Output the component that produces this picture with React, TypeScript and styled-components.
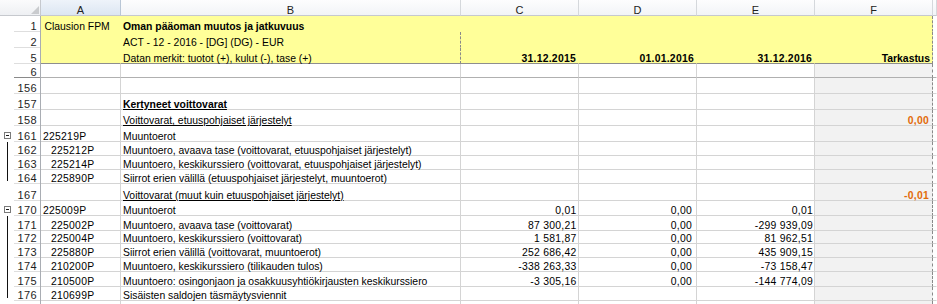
import React from 'react';
import styled, { createGlobalStyle } from 'styled-components';

const GlobalStyle = createGlobalStyle`
  html, body { margin: 0; padding: 0; background: #ffffff; }
  body { overflow: hidden; }
`;

const FONT = `"Liberation Sans", Arial, "DejaVu Sans", sans-serif`;
const GRID = '41px 80px 340px 118px 118px 118px 118px 1fr';

type Fill = 'white' | 'yellow' | 'grey';
type Edge = 'grid' | 'none' | 'dark' | 'freeze' | 'dash';
type Col = 'A' | 'B' | 'C' | 'D' | 'E' | 'F';

const FILL: Record<Fill, string> = { white: '#ffffff', yellow: '#ffff99', grey: '#f2f2f2' };
const EDGE: Record<Edge, string> = {
  grid: '1px solid #d4d4d4',
  none: '1px solid transparent',
  dark: '1px solid #8e8e8e',
  freeze: '1px solid #b0b0b0',
  dash: '1px dashed #8a8a8a',
};

const Sheet = styled.div`
  width: 937px;
  height: 304px;
  overflow: hidden;
  display: flex;
  flex-direction: column;
  font-family: ${FONT};
  font-size: 10.4px;
  color: #000;
  background: #fff;
`;

const Row = styled.div<{ $h: number }>`
  flex: 0 0 ${p => p.$h}px;
  min-height: 0;
  display: grid;
  grid-template-columns: ${GRID};
`;

const Corner = styled.div`
  box-sizing: border-box;
  border-right: 1px solid #c6c9ce;
  border-bottom: 1px solid #c6c9ce;
  background: linear-gradient(#fbfbfc, #eef0f3);
  display: flex;
  align-items: flex-end;
  justify-content: flex-end;
  padding: 0 1px 1px 0;
`;

const ColHead = styled.div<{ $selected?: boolean }>`
  box-sizing: border-box;
  border-right: 1px solid ${p => (p.$selected ? '#b9c6d6' : '#d5d8dc')};
  border-bottom: 1px solid #c6c9ce;
  background: ${p =>
    p.$selected ? 'linear-gradient(#eef3fa, #dce6f2)' : 'linear-gradient(#fdfdfe, #f2f4f7)'};
  display: flex;
  align-items: flex-end;
  justify-content: center;
  font-size: 11px;
  line-height: 9px;
  color: #222;
  overflow: hidden;
`;

const RowHead = styled.div`
  box-sizing: border-box;
  display: flex;
  border-right: 1px solid #a9adb3;
  background: #ffffff;
  min-height: 0;
`;

const Gutter = styled.div`
  flex: 0 0 14px;
  display: flex;
  justify-content: center;
  align-items: center;
`;

const OutlineLine = styled.div<{ $end?: boolean }>`
  width: 1px;
  align-self: stretch;
  background: #111;
  margin-bottom: ${p => (p.$end ? 3 : 0)}px;
`;

const OutlineBox = styled.svg`
  display: block;
  margin-top: 2px;
`;

const RowNum = styled.div<{ $freeze?: boolean }>`
  flex: 1;
  box-sizing: border-box;
  border-bottom: 1px solid ${p => (p.$freeze ? '#8a8a8a' : '#dedede')};
  display: flex;
  align-items: flex-end;
  justify-content: flex-end;
  padding-right: 3px;
  font-size: 11px;
  line-height: 9px;
  letter-spacing: 0.4px;
  color: #1e1e1e;
  overflow: hidden;
`;

const Cell = styled.div<{
  $fill: Fill;
  $bottom: Edge;
  $right: Edge;
  $align: 'left' | 'right';
  $pl: number;
  $pr: number;
}>`
  box-sizing: border-box;
  min-width: 0;
  background: ${p => FILL[p.$fill]};
  border-bottom: ${p => EDGE[p.$bottom]};
  border-right: ${p => EDGE[p.$right]};
  display: flex;
  align-items: flex-end;
  justify-content: ${p => (p.$align === 'right' ? 'flex-end' : 'flex-start')};
  padding: 0 ${p => p.$pr}px 0 ${p => p.$pl}px;
  line-height: 9px;
  white-space: nowrap;
`;

const Value = styled.span<{ $bold?: boolean; $under?: boolean; $orange?: boolean; $num?: boolean }>`
  font-weight: ${p => (p.$bold ? 700 : 400)};
  text-decoration: ${p => (p.$under ? 'underline' : 'none')};
  color: ${p => (p.$orange ? '#e26b0a' : '#000')};
  letter-spacing: ${p => (p.$num ? '0.25px' : '0')};
`;

type CellDef = {
  t: string;
  bold?: boolean;
  under?: boolean;
  orange?: boolean;
  right?: boolean;
  num?: boolean;
  indent?: boolean;
  pl?: number;
  pr?: number;
};

type RowDef = {
  n: string;
  h: number;
  yellow?: boolean;
  yellowEnd?: boolean;
  dashB?: boolean;
  freeze?: boolean;
  outline?: 'box' | 'line' | 'end';
  cells: Partial<Record<Col, CellDef>>;
};

const num = (t: string, pr = 1.5): CellDef => ({ t, right: true, num: true, pr });
const hdr = (t: string, pr = 2): CellDef => ({ t, right: true, bold: true, num: true, pr });

const dataRow = (
  n: string,
  h: number,
  code: string,
  label: string,
  c?: string,
  d?: string,
  e?: string,
  outline: RowDef['outline'] = 'line',
): RowDef => ({
  n,
  h,
  outline,
  cells: {
    A: { t: code, num: true, indent: true },
    B: { t: label },
    ...(c ? { C: num(c) } : {}),
    ...(d ? { D: num(d, 4) } : {}),
    ...(e ? { E: num(e, 1) } : {}),
  },
});

const ROWS: RowDef[] = [
  {
    n: '1',
    h: 16,
    yellow: true,
    cells: { A: { t: 'Clausion FPM', pl: 3.5 }, B: { t: 'Oman pääoman muutos ja jatkuvuus', bold: true } },
  },
  { n: '2', h: 16, yellow: true, dashB: true, cells: { B: { t: 'ACT - 12 - 2016 - [DG] (DG) - EUR' } } },
  {
    n: '5',
    h: 16,
    yellow: true,
    yellowEnd: true,
    dashB: true,
    cells: {
      B: { t: 'Datan merkit: tuotot (+), kulut (-), tase (+)' },
      C: hdr('31.12.2015'),
      D: hdr('01.01.2016'),
      E: hdr('31.12.2016', 2),
      F: { t: 'Tarkastus', right: true, bold: true, pr: 2 },
    },
  },
  { n: '6', h: 14, freeze: true, cells: {} },
  { n: '156', h: 16, cells: {} },
  { n: '157', h: 16, cells: { B: { t: 'Kertyneet voittovarat', bold: true, under: true } } },
  {
    n: '158',
    h: 16,
    cells: {
      B: { t: 'Voittovarat, etuuspohjaiset järjestelyt', under: true },
      F: { t: '0,00', bold: true, orange: true, right: true, num: true, pr: 3 },
    },
  },
  {
    n: '161',
    h: 16,
    outline: 'box',
    cells: { A: { t: '225219P', num: true }, B: { t: 'Muuntoerot' } },
  },
  dataRow('162', 14, '225212P', 'Muuntoero, avaava tase (voittovarat, etuuspohjaiset järjestelyt)'),
  dataRow('163', 14, '225214P', 'Muuntoero, keskikurssiero (voittovarat, etuuspohjaiset järjestelyt)'),
  dataRow(
    '164',
    14,
    '225890P',
    'Siirrot erien välillä (etuuspohjaiset järjestelyt, muuntoerot)',
    undefined,
    undefined,
    undefined,
    'end',
  ),
  {
    n: '167',
    h: 17,
    cells: {
      B: { t: 'Voittovarat (muut kuin etuuspohjaiset järjestelyt)', under: true },
      F: { t: '-0,01', bold: true, orange: true, right: true, num: true, pr: 3 },
    },
  },
  {
    n: '170',
    h: 15,
    outline: 'box',
    cells: {
      A: { t: '225009P', num: true },
      B: { t: 'Muuntoerot' },
      C: num('0,01'),
      D: num('0,00', 4),
      E: num('0,01', 1),
    },
  },
  dataRow('171', 15, '225002P', 'Muuntoero, avaava tase (voittovarat)', '87 300,21', '0,00', '-299 939,09'),
  dataRow('172', 13, '225004P', 'Muuntoero, keskikurssiero (voittovarat)', '1 581,87', '0,00', '81 962,51'),
  dataRow('173', 14, '225880P', 'Siirrot erien välillä (voittovarat, muuntoerot)', '252 686,42', '0,00', '435 909,15'),
  dataRow('174', 14, '210200P', 'Muuntoero, keskikurssiero (tilikauden tulos)', '-338 263,33', '0,00', '-73 158,47'),
  dataRow(
    '175',
    15,
    '210500P',
    'Muuntoero: osingonjaon ja osakkuusyhtiökirjausten keskikurssiero',
    '-3 305,16',
    '0,00',
    '-144 774,09',
  ),
  dataRow('176', 14, '210699P', 'Sisäisten saldojen täsmäytysviennit', undefined, undefined, undefined, 'end'),
  { n: '', h: 14, cells: {} },
];

const COLS: Col[] = ['A', 'B', 'C', 'D', 'E', 'F'];

const MinusBox = () => (
  <OutlineBox width="7" height="7" viewBox="0 0 7 7">
    <rect x="0.5" y="0.5" width="6" height="6" fill="#ffffff" stroke="#7a7a7a" />
    <line x1="2" y1="3.5" x2="5" y2="3.5" stroke="#1a1a1a" />
  </OutlineBox>
);

const CornerMark = () => (
  <svg width="8" height="8" viewBox="0 0 8 8">
    <polygon points="8,0 8,8 0,8" fill="#c9cbce" />
  </svg>
);

const SheetRow = ({ row }: { row: RowDef }) => {
  const bottomEdge: Edge = row.yellow ? (row.yellowEnd ? 'dark' : 'none') : row.freeze ? 'freeze' : 'grid';
  return (
    <Row $h={row.h}>
      <RowHead>
        <Gutter>
          {row.outline === 'box' && <MinusBox />}
          {row.outline === 'line' && <OutlineLine />}
          {row.outline === 'end' && <OutlineLine $end />}
        </Gutter>
        <RowNum $freeze={row.freeze}>{row.n}</RowNum>
      </RowHead>
      {COLS.map(col => {
        const def = row.cells[col];
        const fill: Fill = row.yellow ? 'yellow' : col === 'F' ? 'grey' : 'white';
        let right: Edge = row.yellow ? 'none' : 'grid';
        if (col === 'F') right = 'dash';
        if (col === 'B' && row.dashB) right = 'dash';
        const pl = def?.pl ?? (def?.indent ? 10 : 2);
        return (
          <Cell
            key={col}
            $fill={fill}
            $bottom={bottomEdge}
            $right={right}
            $align={def?.right ? 'right' : 'left'}
            $pl={pl}
            $pr={def?.pr ?? 2}
          >
            {def && (
              <Value $bold={def.bold} $under={def.under} $orange={def.orange} $num={def.num}>
                {def.t}
              </Value>
            )}
          </Cell>
        );
      })}
      <Cell $fill="white" $bottom={row.yellow ? 'none' : bottomEdge} $right="none" $align="left" $pl={2} $pr={0} />
    </Row>
  );
};

export default function App() {
  return (
    <>
      <GlobalStyle />
      <Sheet>
        <Row $h={16}>
          <Corner>
            <CornerMark />
          </Corner>
          <ColHead $selected>A</ColHead>
          <ColHead>B</ColHead>
          <ColHead>C</ColHead>
          <ColHead>D</ColHead>
          <ColHead>E</ColHead>
          <ColHead>F</ColHead>
          <ColHead />
        </Row>
        {ROWS.map((r, i) => (
          <SheetRow key={`${r.n}-${i}`} row={r} />
        ))}
      </Sheet>
    </>
  );
}
